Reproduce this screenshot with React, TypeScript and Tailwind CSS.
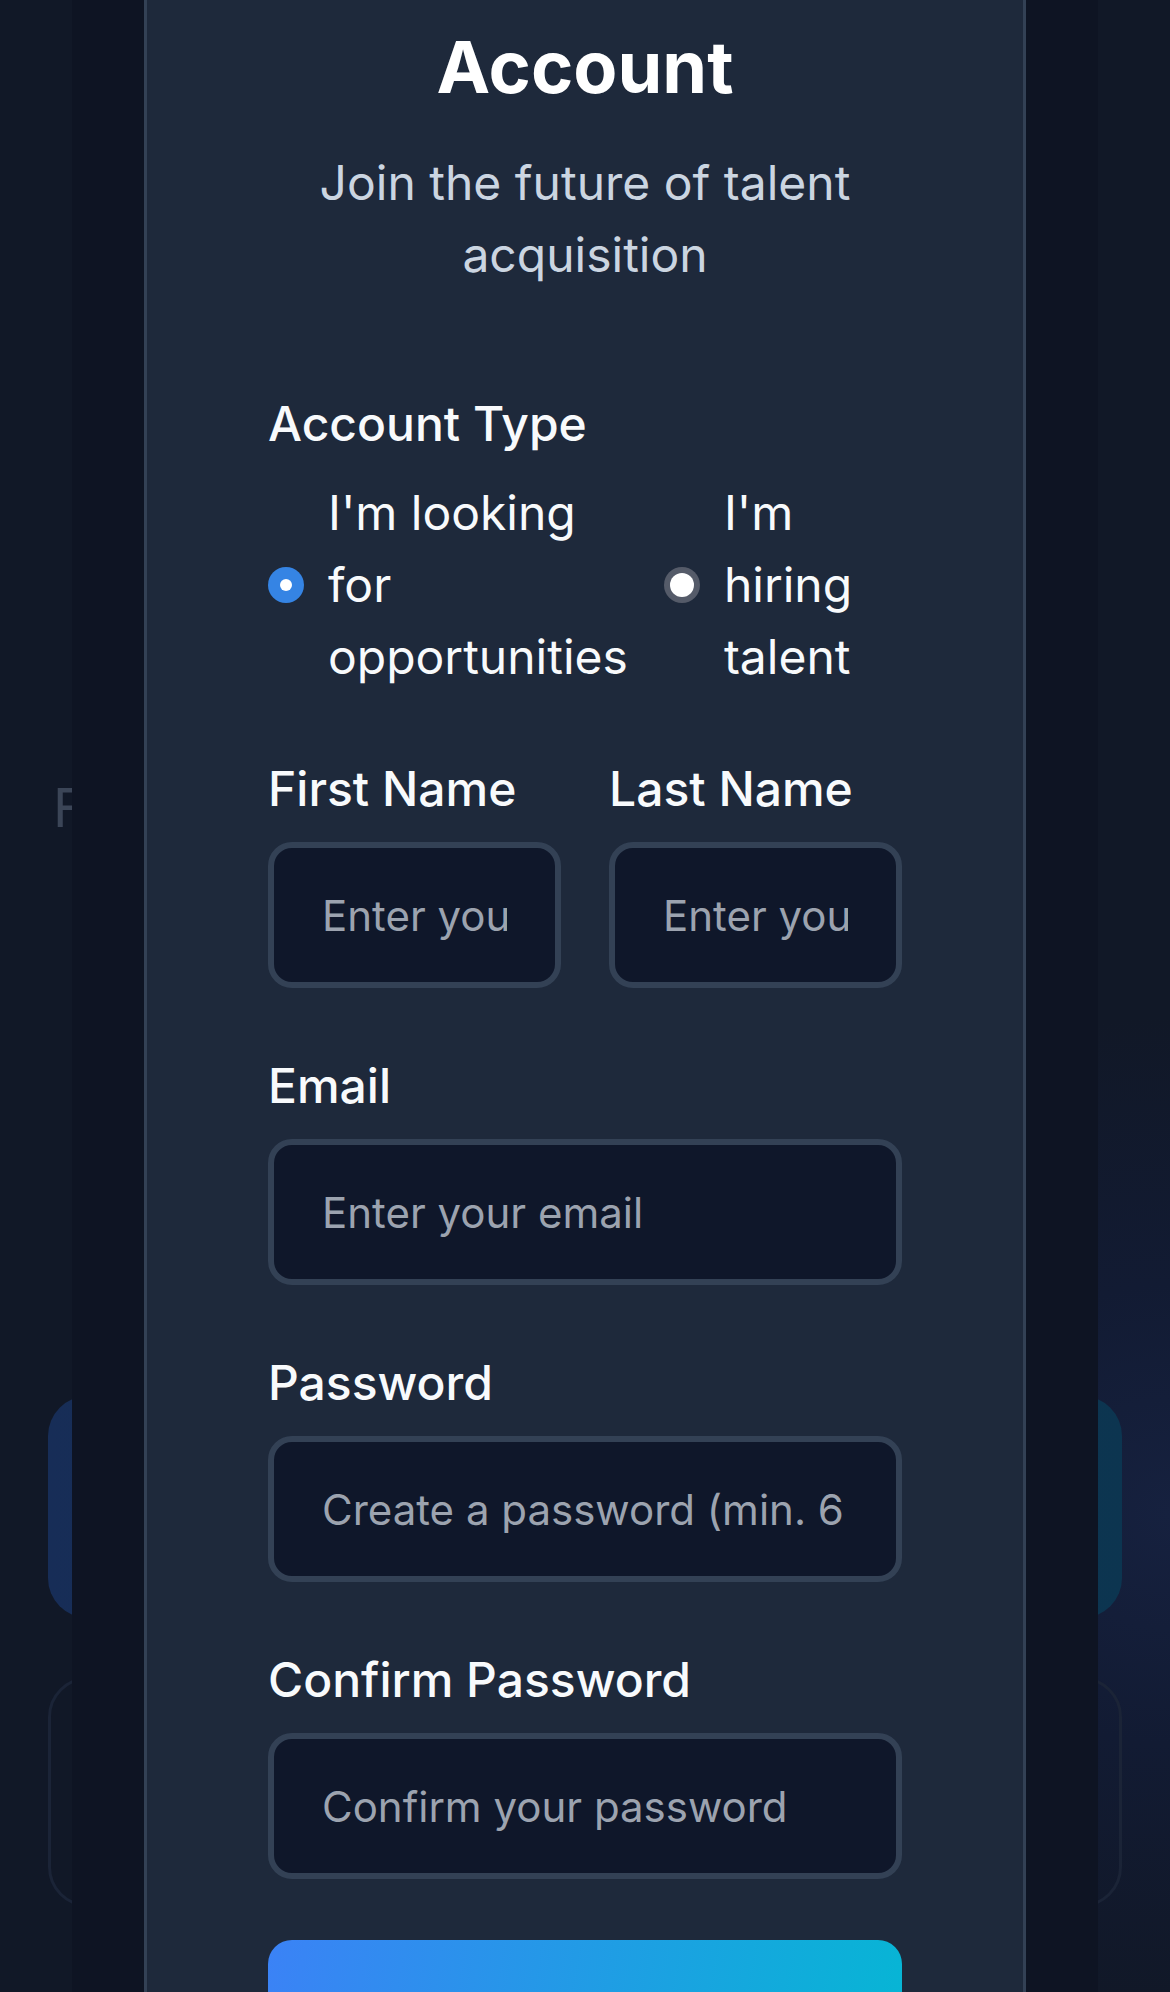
import React from 'react'

interface FieldProps {
	label: string
	placeholder: string
	type?: string
}

function Field({ label, placeholder, type = 'text' }: FieldProps) {
	return (
		<div className="flex flex-col">
			<label className="mb-[17px] block text-[48px] font-medium leading-[72px] text-[#f8fafc]">{label}</label>
			<input
				type={type}
				placeholder={placeholder}
				className="h-[146px] w-full min-w-0 rounded-[24px] border-[6px] border-[#334155] bg-[#0f172a] px-[48px] text-[42px] text-white outline-none placeholder:text-[#9ca3af]"
			/>
		</div>
	)
}

function Radio({ checked }: { checked: boolean }) {
	if (checked) {
		return (
			<span className="flex h-[36px] w-[36px] shrink-0 items-center justify-center rounded-full bg-[#3584e4]">
				<span className="h-[12px] w-[12px] rounded-full bg-white" />
			</span>
		)
	}
	return (
		<span className="flex h-[36px] w-[36px] shrink-0 items-center justify-center rounded-full bg-[#555b69]">
			<span className="h-[24px] w-[24px] rounded-full bg-white" />
		</span>
	)
}

export default function App() {
	return (
		<div className="relative h-[1992px] overflow-hidden bg-[#0f172a] bg-[radial-gradient(circle_at_100%_76%,#16213f_0%,#121b33_12%,#111827_26%)] font-['Inter',sans-serif]">
			{/* page behind the dialog */}
			<div className="flex flex-col px-[48px]">
				<p className="ml-[5px] mt-[767px] whitespace-nowrap text-[54px] leading-[81px] text-[#3b4557]">Find</p>
				<div className="mt-[548px] h-[222px] rounded-[40px] bg-linear-to-r from-[#172d57] to-[#0c3550]" />
				<div className="mt-[59px] h-[230px] rounded-[40px] border-[3px] border-[#1b2437]" />
			</div>

			{/* dialog overlay */}
			<div className="absolute inset-0 flex justify-center px-[72px]">
				<div className="flex w-full justify-center bg-[#0e1423] px-[72px]">
					<div className="w-full border-x-[3px] border-[#334155] bg-[#1e293b] px-[121px] pt-[19px]">
						<h1 className="text-center text-[72px] font-bold leading-[96px] text-white">Account</h1>
						<p className="mt-[32px] text-center text-[48px] leading-[72px] text-[#cbd5e1]">Join the future of talent acquisition</p>

						<form className="mt-[97px]">
							<div>
								<label className="mb-[17px] block text-[48px] font-medium leading-[72px] text-[#f8fafc]">Account Type</label>
								<div className="flex gap-[36px]">
									<label className="flex shrink-0 items-center gap-[24px]">
										<Radio checked />
										<span className="w-min text-[48px] leading-[72px] text-[#f8fafc]">I'm looking for opportunities</span>
									</label>
									<label className="flex min-w-0 items-center gap-[24px]">
										<Radio checked={false} />
										<span className="text-[48px] leading-[72px] text-[#f8fafc]">I'm hiring talent</span>
									</label>
								</div>
							</div>

							<div className="mt-[60px] grid grid-cols-2 gap-[48px]">
								<Field label="First Name" placeholder="Enter your first name" />
								<Field label="Last Name" placeholder="Enter your last name" />
							</div>

							<div className="mt-[62px]">
								<Field label="Email" type="email" placeholder="Enter your email" />
							</div>
							<div className="mt-[62px]">
								<Field label="Password" type="password" placeholder="Create a password (min. 6 characters)" />
							</div>
							<div className="mt-[62px]">
								<Field label="Confirm Password" type="password" placeholder="Confirm your password" />
							</div>

							<button
								type="button"
								className="mt-[61px] h-[144px] w-full rounded-[24px] bg-linear-[100deg] from-[#3b82f6] to-[#06b6d4] text-[48px] font-semibold text-white"
							>
								Create Account
							</button>
						</form>
					</div>
				</div>
			</div>
		</div>
	)
}
